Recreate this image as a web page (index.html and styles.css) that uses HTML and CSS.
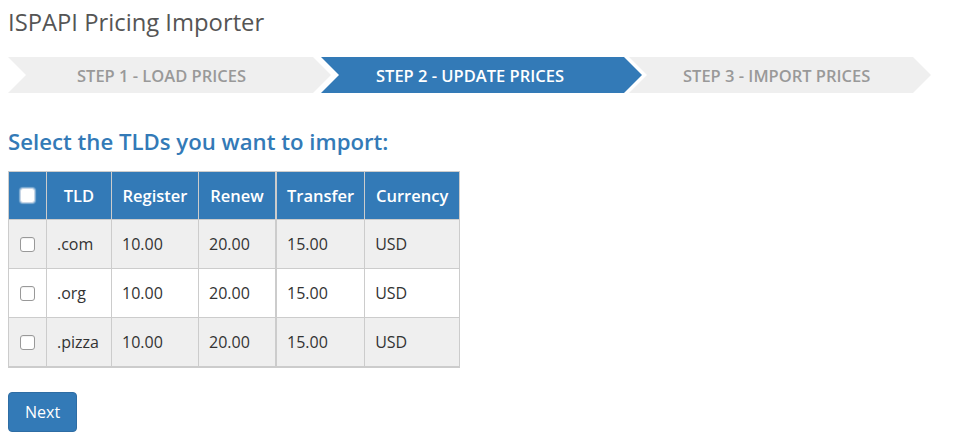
FILE: index.html
```html
<!DOCTYPE html>
<html>
<head>
<meta charset="utf-8">
<title>ISPAPI Pricing Importer</title>
<link rel="stylesheet" href="styles.css">
</head>
<body>
<div class="page">
  <h1 class="title">ISPAPI Pricing Importer</h1>
  <div class="steps">
    <div class="step step-1">STEP 1 - LOAD PRICES</div>
    <div class="step step-2 active">STEP 2 - UPDATE PRICES</div>
    <div class="step step-3">STEP 3 - IMPORT PRICES</div>
  </div>
  <h2 class="subtitle">Select the TLDs you want to import:</h2>
  <table class="tlds">
    <thead>
      <tr>
        <th class="c-check"><input type="checkbox" class="cb cb-head"></th>
        <th class="c-tld">TLD</th>
        <th class="c-reg">Register</th>
        <th class="c-ren">Renew</th>
        <th class="c-tra">Transfer</th>
        <th class="c-cur">Currency</th>
      </tr>
    </thead>
    <tbody>
      <tr class="odd">
        <td class="c-check"><input type="checkbox" class="cb"></td>
        <td>.com</td><td>10.00</td><td>20.00</td><td class="c-tra">15.00</td><td>USD</td>
      </tr>
      <tr>
        <td class="c-check"><input type="checkbox" class="cb"></td>
        <td>.org</td><td>10.00</td><td>20.00</td><td class="c-tra">15.00</td><td>USD</td>
      </tr>
      <tr class="odd last">
        <td class="c-check"><input type="checkbox" class="cb"></td>
        <td>.pizza</td><td>10.00</td><td>20.00</td><td class="c-tra">15.00</td><td>USD</td>
      </tr>
    </tbody>
  </table>
  <button class="btn">Next</button>
</div>
</body>
</html>
```
FILE: styles.css
```css
html, body {
  margin: 0;
  padding: 0;
  background: #fff;
}
.page {
  padding: 0 8px;
  font-family: "Open Sans", "Liberation Sans", sans-serif;
  color: #333;
}
.title {
  margin: 6px 0 0;
  font-size: 23.8px;
  line-height: 32px;
  font-weight: 400;
  color: #555;
}
.steps {
  display: flex;
  margin-top: 19px;
  height: 36px;
}
.step {
  height: 36px;
  line-height: 37px;
  font-size: 16.5px;
  font-weight: 600;
  background: #efefef;
  color: #999;
  white-space: nowrap;
  box-sizing: border-box;
  clip-path: polygon(0 0, calc(100% - 18px) 0, 100% 50%, calc(100% - 18px) 100%, 0 100%, 18px 50%);
}
.step.active {
  background: #337ab7;
  color: #fff;
}
.step-1 {
  width: 323px;
  padding-left: 69px;
}
.step-2 {
  width: 321px;
  margin-left: -10px;
  padding-left: 55px;
}
.step-3 {
  width: 302px;
  margin-left: -13px;
  padding-left: 54px;
}
.subtitle {
  margin: 34px 0 0;
  font-size: 22.2px;
  line-height: 30px;
  font-weight: 600;
  color: #337ab7;
}
.tlds {
  margin-top: 14px;
  border-collapse: collapse;
  font-size: 16px;
}
.tlds th, .tlds td {
  border: 1px solid #ccc;
  padding: 0 10px;
  text-align: left;
}
.tlds th {
  background: #337ab7;
  color: #fff;
  font-weight: 600;
  font-size: 16.5px;
  height: 47px;
  text-align: center;
  white-space: nowrap;
}
.tlds td {
  height: 48px;
}
.tlds tr.odd td {
  background: #efefef;
}
.tlds tr.last td {
  border-bottom-width: 2px;
}
.tlds .c-tra {
  border-left-width: 2px;
}
.c-check { width: 17px; text-align: center; }
.c-tld { width: 44px; }
.c-reg { width: 66px; }
.c-ren { width: 56px; }
.c-tra { width: 67px; }
.c-cur { width: 76px; }
.tlds th.c-check, .tlds td.c-check {
  padding: 0 10px 0 11px;
  width: 16px;
}
.tlds th.c-cur {
  padding: 0 9px;
}
.cb {
  appearance: none;
  -webkit-appearance: none;
  display: block;
  width: 15px;
  height: 15px;
  margin: 0;
  border: 1px solid #999;
  border-radius: 3px;
  background: #fff;
  box-sizing: border-box;
  box-shadow: inset 0 1px 1px rgba(0,0,0,0.06);
}
.cb-head {
  border-color: #c8d6e6;
  box-shadow: 0 0 1px 1px rgba(255,255,255,0.4);
}
.btn {
  display: block;
  margin-top: 24px;
  height: 40px;
  padding: 0 16px;
  font-family: "Open Sans", "Liberation Sans", sans-serif;
  font-size: 16px;
  color: #fff;
  background: #337ab7;
  border: 1px solid #2e6da4;
  border-radius: 4px;
}
```
